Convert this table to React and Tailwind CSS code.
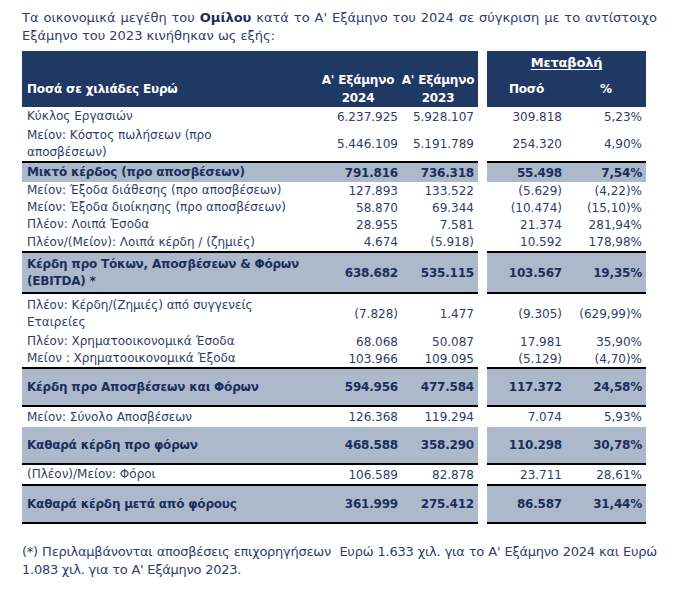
import React from "react";

const rows = [
  { label: ["Κύκλος Εργασιών"], v: ["6.237.925", "5.928.107", "309.818", "5,23%"], h: "h-[19px]" },
  { label: ["Μείον: Κόστος πωλήσεων (προ", "αποσβέσεων)"], v: ["5.446.109", "5.191.789", "254.320", "4,90%"], h: "h-[35px]" },
  { label: ["Μικτό κέρδος (προ αποσβέσεων)"], v: ["791.816", "736.318", "55.498", "7,54%"], h: "h-[21px]", bold: true, top: true },
  { label: ["Μείον: Έξοδα διάθεσης (προ αποσβέσεων)"], v: ["127.893", "133.522", "(5.629)", "(4,22)%"], h: "h-[17px]" },
  { label: ["Μείον: Έξοδα διοίκησης (προ αποσβέσεων)"], v: ["58.870", "69.344", "(10.474)", "(15,10)%"], h: "h-[17px]" },
  { label: ["Πλέον: Λοιπά Έσοδα"], v: ["28.955", "7.581", "21.374", "281,94%"], h: "h-[17px]" },
  { label: ["Πλέον/(Μείον): Λοιπά κέρδη / (ζημιές)"], v: ["4.674", "(5.918)", "10.592", "178,98%"], h: "h-[18px]" },
  { label: ["Κέρδη προ Τόκων, Αποσβέσεων & Φόρων", "(EBITDA) *"], v: ["638.682", "535.115", "103.567", "19,35%"], h: "h-[43px]", bold: true, top: true, bottom: true },
  { label: ["Πλέον: Κέρδη/(Ζημιές) από συγγενείς", "Εταιρείες"], v: ["(7.828)", "1.477", "(9.305)", "(629,99)%"], h: "h-[39px]" },
  { label: ["Πλέον: Χρηματοοικονομικά Έσοδα"], v: ["68.068", "50.087", "17.981", "35,90%"], h: "h-[17px]" },
  { label: ["Μείον : Χρηματοοικονομικά Έξοδα"], v: ["103.966", "109.095", "(5.129)", "(4,70)%"], h: "h-[17px]" },
  { label: ["Κέρδη προ Αποσβέσεων και Φόρων"], v: ["594.956", "477.584", "117.372", "24,58%"], h: "h-[40px]", bold: true, top: true, bottom: true },
  { label: ["Μείον: Σύνολο Αποσβέσεων"], v: ["126.368", "119.294", "7.074", "5,93%"], h: "h-[20px]" },
  { label: ["Καθαρά κέρδη προ φόρων"], v: ["468.588", "358.290", "110.298", "30,78%"], h: "h-[38px]", bold: true, bottom: true },
  { label: ["(Πλέον)/Μείον: Φόροι"], v: ["106.589", "82.878", "23.711", "28,61%"], h: "h-[19px]" },
  { label: ["Καθαρά κέρδη μετά από φόρους"], v: ["361.999", "275.412", "86.587", "31,44%"], h: "h-[40px]", bold: true, top: true, bottom: true },
];

function Row({ r }) {
  const tone = r.bold
    ? "bg-[#acb9ca] font-bold text-[#1a2f5e] tracking-[-0.2px]"
    : "text-[#2c3e6c]";
  const lines = `${r.top ? "border-t-2" : ""} ${r.bottom ? "border-b-2" : ""} border-black`;
  return (
    <div className={`flex gap-[9px] ${r.h}`}>
      <div className={`flex w-[456px] items-center whitespace-nowrap ${tone} ${lines}`}>
        <div className="w-[296px] pl-[5px] leading-[17px]">
          {r.label.map((l) => (
            <div key={l}>{l}</div>
          ))}
        </div>
        <div className="w-[80px] text-right">{r.v[0]}</div>
        <div className="w-[80px] pr-[4px] text-right">{r.v[1]}</div>
      </div>
      <div className={`flex w-[159px] items-center whitespace-nowrap ${tone} ${lines}`}>
        <div className="w-[79px] pr-[4px] text-right">{r.v[2]}</div>
        <div className="w-[80px] pr-[4px] text-right">{r.v[3]}</div>
      </div>
    </div>
  );
}

export default function App() {
  return (
    <div className="min-h-[598px] w-[687px] bg-white pl-[22px] pt-[9px] font-['DejaVu_Sans',sans-serif] text-[#2c3e6c]">
      <p className="w-[635px] text-justify text-[13px] leading-[18px]">
        Τα οικονομικά μεγέθη του <b className="text-[#1a2f5e]">Ομίλου</b> κατά το Α' Εξάμηνο του 2024 σε σύγκριση με το αντίστοιχο
        Εξάμηνο του 2023 κινήθηκαν ως εξής:
      </p>

      <div className="mt-[6px] flex flex-col text-[12px]">
        <div className="flex h-[56px] gap-[9px] whitespace-nowrap font-bold tracking-[-0.2px] text-white">
          <div className="flex w-[456px] items-center bg-[#1f3864] pb-[4px] pt-[24px] leading-[18px]">
            <div className="w-[296px] pl-[5px]">Ποσά σε χιλιάδες Ευρώ</div>
            <div className="w-[80px] text-center">
              Α' Εξάμηνο
              <br />
              2024
            </div>
            <div className="w-[80px] text-center">
              Α' Εξάμηνο
              <br />
              2023
            </div>
          </div>
          <div className="flex w-[159px] flex-col bg-[#1f3864] pb-[4px]">
            <div className="flex h-[24px] items-center justify-center text-[13px] underline underline-offset-2">
              Μεταβολή
            </div>
            <div className="flex flex-1 items-center">
              <div className="w-[79px] text-center">Ποσό</div>
              <div className="w-[80px] text-center">%</div>
            </div>
          </div>
        </div>

        {rows.map((r) => (
          <Row key={r.label[0]} r={r} />
        ))}
      </div>

      <p className="mt-[19px] w-[635px] text-justify text-[13px] leading-[18px] tracking-[-0.25px]">
        (*) Περιλαμβάνονται αποσβέσεις επιχορηγήσεων&nbsp; Ευρώ 1.633 χιλ. για το Α' Εξάμηνο 2024 και Ευρώ
        1.083 χιλ. για το Α' Εξάμηνο 2023.
      </p>
    </div>
  );
}
